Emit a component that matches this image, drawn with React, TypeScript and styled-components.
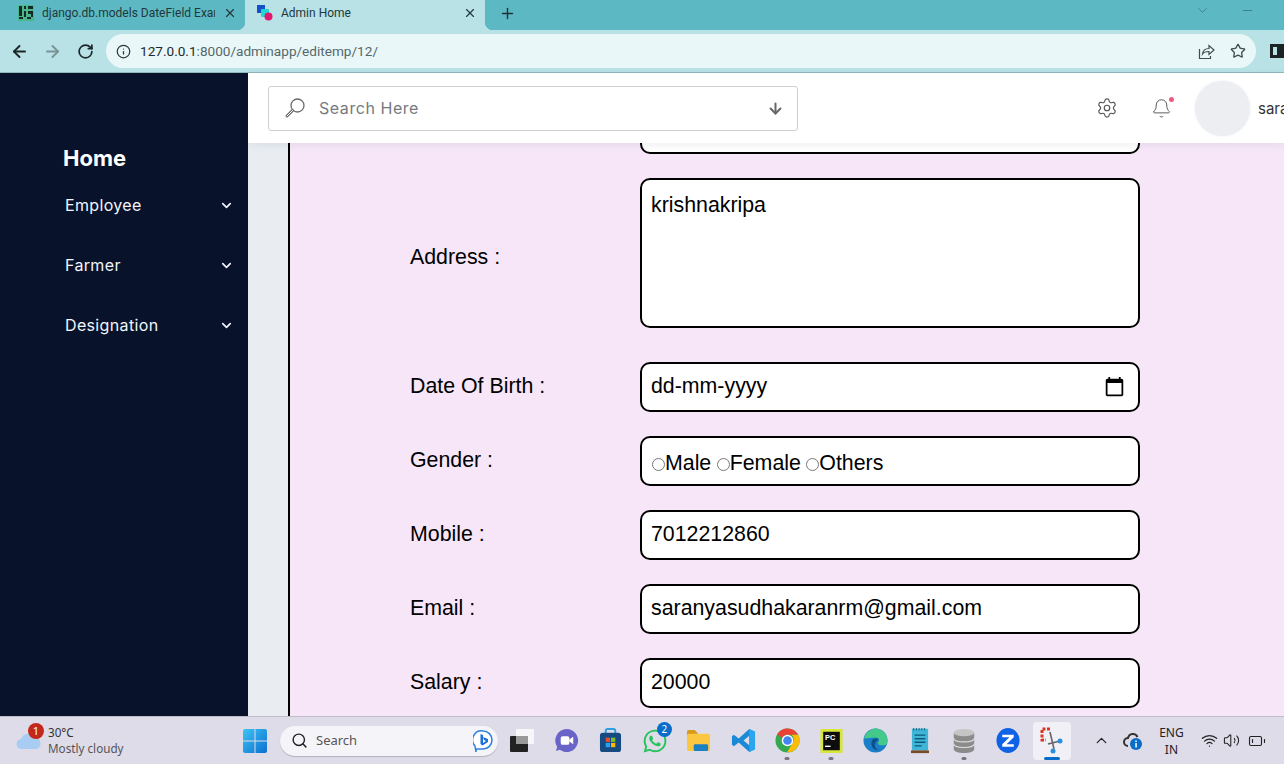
import React from 'react';
import styled, { createGlobalStyle, css } from 'styled-components';
import {
  ArrowLeft, ArrowRight, RotateCw, Info, Star, X, Plus, ChevronDown, Minus,
  Settings, Bell, ArrowDown, Search, ChevronUp, Wifi, Volume2, BatteryLow,
} from 'lucide-react';
import { FaWhatsapp } from 'react-icons/fa';

const GlobalStyle = createGlobalStyle`
  html, body { margin: 0; padding: 0; overflow: hidden; }
  * { box-sizing: border-box; }
  svg { flex: none; }
`;

const Screen = styled.div`
  width: 1284px;
  height: 764px;
  display: flex;
  flex-direction: column;
  overflow: hidden;
  font-family: 'Liberation Sans', Arial, sans-serif;
`;

/* browser chrome */
const TabStrip = styled.div`
  height: 30px;
  flex: none;
  display: flex;
  align-items: stretch;
  background: #5cb8c2;
  color: #23383b;
  font-family: Roboto, 'Noto Sans', sans-serif;
  font-size: 12px;
`;

const Tab = styled.div<{ $active?: boolean; $width: number }>`
  position: relative;
  width: ${p => p.$width}px;
  display: flex;
  align-items: center;
  gap: 8px;
  padding: 0 8px 4px ${p => (p.$active ? 12 : 18)}px;
  background: ${p => (p.$active ? '#b8e2e6' : 'transparent')};

  ${p => p.$active && css`
    &::before, &::after {
      content: '';
      position: absolute;
      bottom: 0;
      width: 8px;
      height: 8px;
    }
    &::before {
      left: -8px;
      background: radial-gradient(circle at 0 0, transparent 8px, #b8e2e6 8.5px);
    }
    &::after {
      right: -8px;
      background: radial-gradient(circle at 100% 0, transparent 8px, #b8e2e6 8.5px);
    }
  `}
`;

const TabTitle = styled.span`
  flex: 1;
  white-space: nowrap;
  overflow: hidden;
`;

const NewTab = styled.div`
  width: 44px;
  display: flex;
  align-items: center;
  justify-content: center;
  padding-bottom: 3px;
  color: #1f3336;
`;

const WindowControls = styled.div`
  margin-left: auto;
  display: flex;
  gap: 30px;
  padding: 3px 29px 0 0;
  color: #33626a;
`;

const Toolbar = styled.div`
  height: 43px;
  flex: none;
  display: flex;
  align-items: center;
  padding: 0 0 0 3px;
  background: #b8e2e6;
  border-bottom: 1px solid #8fb8bc;
`;

const NavButton = styled.div<{ $dim?: boolean }>`
  width: 33px;
  display: flex;
  justify-content: center;
  color: ${p => (p.$dim ? '#7b9295' : '#1d2526')};
`;

const Omnibox = styled.div`
  width: 1150px;
  height: 34px;
  margin-left: 4px;
  flex: none;
  display: flex;
  align-items: center;
  padding: 0 2px 0 10px;
  border-radius: 17px;
  background: #eaf7f8;
  color: #54686b;
  font-family: Roboto, 'Noto Sans', sans-serif;
  font-size: 13.6px;
`;

const Url = styled.div`
  flex: 1;
  padding-left: 9px;
  b { font-weight: 400; color: #1f2a2c; }
`;

const OmniAction = styled.div`
  width: 32px;
  display: flex;
  justify-content: center;
  color: #3f4d4f;
`;

const SidePanelGlyph = styled.div`
  width: 14px;
  height: 14px;
  margin-left: 14px;
  flex: none;
  border: 3px solid #1c2324;
  border-right-width: 7px;
`;

/* page */
const Page = styled.div`
  flex: 1;
  min-height: 0;
  display: flex;
`;

const Sidebar = styled.nav`
  width: 248px;
  flex: none;
  padding: 71px 14px 0 63px;
  background: #09122b;
  color: #f1f5fc;
  font-family: Inter, sans-serif;
`;

const Home = styled.div`
  font-size: 22px;
  font-weight: 700;
  line-height: 28px;
  color: #fff;
  margin-bottom: 20px;
`;

const NavItem = styled.div`
  height: 60px;
  display: flex;
  justify-content: space-between;
  padding: 2px 0 0 2px;
  font-size: 16px;
  line-height: 22px;
  letter-spacing: 0.35px;
`;

const NavChevron = styled(ChevronDown)`
  margin-top: 4px;
`;

const Main = styled.div`
  flex: 1;
  min-width: 0;
  display: flex;
  flex-direction: column;
  background: #e9edf2;
`;

const TopBar = styled.header`
  height: 70px;
  flex: none;
  position: relative;
  z-index: 1;
  display: flex;
  align-items: center;
  padding-left: 20px;
  background: #fff;
  box-shadow: 0 2px 8px rgba(40, 50, 70, 0.08);
  font-family: Inter, sans-serif;
`;

const SearchBox = styled.div`
  width: 530px;
  height: 45px;
  flex: none;
  display: flex;
  align-items: center;
  gap: 13px;
  padding: 0 13px 0 15px;
  margin-right: 281px;
  border: 1px solid #cfcfcf;
  border-radius: 3px;
  color: #757a80;
  font-size: 16px;
  letter-spacing: 0.55px;
`;

const SearchText = styled.span`
  flex: 1;
`;

const TopAction = styled.div`
  position: relative;
  width: 55px;
  flex: none;
  display: flex;
  justify-content: center;
  color: #555;
`;

const NotificationDot = styled.span`
  position: absolute;
  top: -1px;
  right: 15px;
  width: 5px;
  height: 5px;
  border-radius: 50%;
  background: #f4587f;
`;

const Avatar = styled.div`
  width: 55px;
  height: 55px;
  margin-left: 6px;
  flex: none;
  border-radius: 50%;
  background: #eceef1;
  box-shadow: 0 0 3px #eceef1;
`;

const UserName = styled.span`
  margin-left: 8px;
  font-size: 15px;
  color: #333;
  white-space: nowrap;
`;

const Content = styled.div`
  flex: 1;
  min-height: 0;
  overflow: hidden;
  padding-left: 40px;
`;

const FormPanel = styled.form`
  margin-top: -39px;
  min-height: 700px;
  padding-left: 120px;
  display: flex;
  flex-direction: column;
  gap: 24px;
  border-left: 2px solid #000;
  background: #f6e6f8;
  color: #000;
  font-size: 21.33px;
`;

const FormRow = styled.div<{ $extraTop?: number }>`
  display: grid;
  grid-template-columns: 230px 500px;
  align-items: center;
  margin-top: ${p => p.$extraTop ?? 0}px;
`;

const FieldLabel = styled.label<{ $shift?: number }>`
  padding: ${p => p.$shift ?? 0}px 0 ${p => (p.$shift ? 0 : 1)}px;
`;

const fieldCss = css`
  width: 500px;
  border: 2px solid #000;
  border-radius: 10px;
  background: #fff;
  color: #000;
  font-family: 'Liberation Sans', Arial, sans-serif;
  font-size: 21.33px;
  outline: none;
`;

const TextField = styled.input`
  ${fieldCss}
  height: 50px;
  padding: 0 9px 2px;
`;

const AddressField = styled.textarea`
  ${fieldCss}
  height: 150px;
  padding: 13px 9px;
  resize: none;
  display: block;
`;

const DateField = styled.div`
  ${fieldCss}
  height: 50px;
  padding: 0 13px 2px 9px;
  display: flex;
  align-items: center;
  justify-content: space-between;
`;

const RadioGroup = styled.div`
  ${fieldCss}
  height: 50px;
  padding: 4px 10px 0;
  display: flex;
  align-items: center;
`;

const RadioLabel = styled.label`
  display: flex;
  align-items: center;
  margin-right: 5.5px;
  input { margin: 3px 0 0 0; width: 13px; height: 13px; }
`;

/* windows taskbar */
const Taskbar = styled.footer`
  height: 48px;
  flex: none;
  display: flex;
  align-items: center;
  background: #dfdcea;
  border-top: 1px solid #c0bcc9;
  font-family: 'Noto Sans', Roboto, sans-serif;
  font-size: 11.7px;
  color: #333;
`;

const Weather = styled.div`
  width: 243px;
  flex: none;
  position: relative;
  display: flex;
  align-items: center;
  gap: 6px;
  padding: 0 0 2px 16px;
  line-height: 16px;
`;

const WeatherBadge = styled.span`
  position: absolute;
  left: 28px;
  top: -1px;
  width: 16px;
  height: 16px;
  border-radius: 50%;
  background: #c4281c;
  color: #fff;
  font-size: 11px;
  line-height: 16px;
  text-align: center;
`;

const MutedLine = styled.div`
  color: #555;
`;

const TaskSearch = styled.div`
  width: 218px;
  height: 30px;
  margin-left: 13px;
  flex: none;
  display: flex;
  align-items: center;
  gap: 8px;
  padding: 0 5px 0 11px;
  border-radius: 15px;
  background: #f5f4f9;
  box-shadow: 0 1px 1px #b4b1bd;
  color: #555;
  font-size: 13px;
  span { flex: 1; padding-bottom: 2px; }
`;

const TaskApps = styled.div`
  display: flex;
  margin-left: 2px;
  flex: none;
`;

const TaskApp = styled.div<{ $selected?: boolean }>`
  position: relative;
  width: ${p => (p.$selected ? 38.2 : 44.2)}px;
  margin: 0 ${p => (p.$selected ? 3 : 0)}px;
  height: 38px;
  display: flex;
  align-items: center;
  justify-content: center;
  border-radius: 4px;
  background: ${p => (p.$selected ? '#f1f0f6' : 'transparent')};
`;

const RunningMark = styled.span<{ $active?: boolean }>`
  position: absolute;
  bottom: 0;
  left: 50%;
  transform: translateX(-50%);
  width: ${p => (p.$active ? 16 : 5)}px;
  height: 3px;
  border-radius: 2px;
  background: ${p => (p.$active ? '#0a6cc9' : '#77757d')};
`;

const AppBadge = styled.span`
  position: absolute;
  top: 0;
  right: 5px;
  width: 15px;
  height: 15px;
  border-radius: 50%;
  background: #0a6cc9;
  color: #fff;
  font-size: 10px;
  line-height: 15px;
  text-align: center;
`;

const Tray = styled.div`
  display: flex;
  align-items: center;
  margin-left: 13px;
  flex: none;
  color: #222;
`;

const TrayLang = styled.div`
  width: 40px;
  margin-right: 3px;
  text-align: center;
  font-size: 12px;
  line-height: 17px;
`;

const TrayIcon = styled.div<{ $width: number }>`
  width: ${p => p.$width}px;
  display: flex;
  justify-content: center;
`;

const TabDjangoIcon = () => (
  <svg width="16" height="16" viewBox="0 0 16 16">
    <rect width="16" height="16" fill="#3db85f" opacity="0.55" />
    <path d="M1 1h3v10H1zM6 1h2v3H6zM10 1h5v3h-5zM6 6h2v6H6zM10 6h5v3h-5zM13 9h2v3h-2zM1 12h4v2H1zM9 12h4v2H9z" fill="#142a2a" />
  </svg>
);

const TabAdminIcon = () => (
  <svg width="16" height="16" viewBox="0 0 16 16">
    <rect x="0" y="0" width="8" height="8" fill="#1450c8" />
    <rect x="4" y="4" width="8" height="8" rx="1" fill="#1fd6d0" />
    <circle cx="11.5" cy="11.5" r="4" fill="#e0196e" />
  </svg>
);

const ShareBoxIcon = () => (
  <svg width="17" height="17" viewBox="0 0 17 17" fill="none" stroke="#3f4d4f" strokeWidth="1.2">
    <path d="M1.500 6v9.500h11V13" />
    <path d="M4.500 11c.5-4 3-5.500 6.500-5.500V2.500l5 4.500-5 4.500V8.500c-3 0-5 .5-6.500 2.500z" />
  </svg>
);

const LoupeIcon = () => (
  <svg width="22" height="22" viewBox="0 0 22 22" fill="none" stroke="#6b6b6b">
    <circle cx="13.5" cy="8.500" r="6.500" strokeWidth="1.300" />
    <path d="M8.500 13.500l-5.500 5.500" strokeWidth="3" strokeLinecap="round" />
    <path d="M8.500 13.500l-5.500 5.500" stroke="#fff" strokeWidth="1" strokeLinecap="round" />
  </svg>
);

const CalendarIcon = () => (
  <svg width="21" height="21" viewBox="0 0 24 24" fill="#000">
    <path d="M20 3h-1V1h-2v2H7V1H5v2H4c-1.100 0-2 .9-2 2v16c0 1.100.9 2 2 2h16c1.100 0 2-.9 2-2V5c0-1.100-.9-2-2-2zm0 18H4V8h16v13z" />
  </svg>
);

const CloudIcon = () => (
  <svg width="26" height="24" viewBox="0 0 26 24">
    <circle cx="18" cy="10" r="5" fill="#f2a33a" />
    <path d="M6 21a5 5 0 0 1-1-10 7 7 0 0 1 13-1 5.500 5.500 0 0 1 2 11z" fill="#a9cdf2" />
  </svg>
);

const WindowsLogo = () => (
  <svg width="24" height="24" viewBox="0 0 24 24">
    <defs>
      <linearGradient id="winGrad" x1="0" y1="0" x2="1" y2="1">
        <stop offset="0" stopColor="#3fc4f4" />
        <stop offset="1" stopColor="#0b6fd0" />
      </linearGradient>
    </defs>
    <path d="M0 2a2 2 0 0 1 2-2h9.500v11.500H0zM12.500 0H22a2 2 0 0 1 2 2v9.500H12.500zM0 12.500h11.500V24H2a2 2 0 0 1-2-2zM12.500 12.500H24V22a2 2 0 0 1-2 2h-9.500z" fill="url(#winGrad)" />
  </svg>
);

const BingIcon = () => (
  <svg width="20" height="24" viewBox="0 0 20 24">
    <path d="M10 2a9 9 0 0 1 0 18H3l0 3 -1-6a9 9 0 0 1 8-15z" fill="#fff" stroke="#2d7fe0" strokeWidth="1.500" />
    <path d="M7.500 5l2.500 1v8l3-2-2-1 -1-3 5 2v3l-5.500 3.500-2-1.500z" fill="#1c6fd6" />
  </svg>
);

const TaskViewIcon = () => (
  <svg width="24" height="23" viewBox="0 0 24 23">
    <rect x="6" y="0" width="18" height="15" rx="1" fill="#f7f7f9" />
    <rect x="0" y="7" width="18" height="16" rx="1" fill="#222" />
    <rect x="6" y="7" width="12" height="8" fill="#999" />
  </svg>
);

const ChatIcon = () => (
  <svg width="25" height="25" viewBox="0 0 26 26">
    <path d="M13 1a12 12 0 1 1-7 21.700L2 24l1.300-4.500A12 12 0 0 1 13 1z" fill="#6a64c8" />
    <rect x="7" y="8.500" width="9" height="9" rx="2" fill="#fff" />
    <path d="M16 12l4-3v8l-4-3z" fill="#fff" />
  </svg>
);

const StoreIcon = () => (
  <svg width="23" height="25" viewBox="0 0 24 26">
    <path d="M7 6V3a2 2 0 0 1 2-2h6a2 2 0 0 1 2 2v3" fill="none" stroke="#2b9fe0" strokeWidth="2" />
    <rect x="1" y="5" width="22" height="20" rx="3" fill="#164a83" />
    <rect x="7" y="10" width="4.500" height="4.500" fill="#ea4b2a" />
    <rect x="12.500" y="10" width="4.500" height="4.500" fill="#7ebc2a" />
    <rect x="7" y="15.500" width="4.500" height="4.500" fill="#26a3ef" />
    <rect x="12.500" y="15.500" width="4.500" height="4.500" fill="#fdb900" />
  </svg>
);

const FolderIcon = () => (
  <svg width="25" height="25" viewBox="0 0 26 26">
    <path d="M1 4a2 2 0 0 1 2-2h6l3 3v4H1z" fill="#d99a1c" />
    <rect x="1" y="6" width="24" height="18" rx="2" fill="#fbc740" />
    <rect x="8" y="17" width="15" height="7" rx="1.500" fill="#1b7fc4" />
  </svg>
);

const VsCodeIcon = () => (
  <svg width="25" height="25" viewBox="0 0 26 26">
    <path d="M19 1l6 3v18l-6 3-11-10-5 4-2-1.500V8.500L3 7l5 4zM19 8l-6 5 6 5z" fill="#1a8ad6" fillRule="evenodd" />
    <path d="M19 1l6 3v18l-6 3z" fill="#2ba6ee" />
  </svg>
);

const ChromeIcon = () => (
  <svg width="25" height="25" viewBox="0 0 26 26">
    <circle cx="13" cy="13" r="12.500" fill="#34a853" />
    <path d="M13 .5A12.500 12.500 0 0 1 24 7H13a6 6 0 0 0-5.500 3.500L2.300 6.500A12.500 12.500 0 0 1 13 .5z" fill="#ea4335" />
    <path d="M24 7a12.500 12.500 0 0 1-11.500 18.500L18 16a6 6 0 0 0-1-9z" fill="#fbbc04" />
    <circle cx="13" cy="13" r="6" fill="#fff" />
    <circle cx="13" cy="13" r="4.500" fill="#4285f4" />
  </svg>
);

const PyCharmIcon = () => (
  <svg width="23" height="24" viewBox="0 0 24 26">
    <rect x="0" y="0" width="24" height="26" fill="#d7e63a" />
    <rect x="3" y="3" width="18" height="20" fill="#0d0d0d" />
    <text x="5" y="12" fontSize="8" fontWeight="700" fill="#fff" fontFamily="Liberation Sans">PC</text>
    <rect x="5" y="18" width="6" height="1.500" fill="#fff" />
  </svg>
);

const EdgeIcon = () => (
  <svg width="25" height="25" viewBox="0 0 26 26">
    <circle cx="13" cy="13" r="12.500" fill="#1a7fc8" />
    <path d="M1 11C3 3 10 .5 13 .5 20 .5 25.500 6 25.500 14c0 3-2 4-5 4-4 0-5-1-5-3 2-1 1.500-5-3-5-4 0-7 1-11 1z" fill="#45c98a" />
    <path d="M13 11c-3 0-5 3-4 7 1 4 5 6 9 5-5 0-7-5-5-8 1-2 3-2 3-4z" fill="#0e4f8d" />
  </svg>
);

const NotepadIcon = () => (
  <svg width="18" height="27" viewBox="0 0 20 30">
    <rect x="1" y="2" width="18" height="24" rx="1" fill="#3fb6d8" />
    <path d="M3 1v3M6 1v3M9 1v3M12 1v3M15 1v3" stroke="#1b6f8a" strokeWidth="1.200" />
    <path d="M4 9h12M4 13h12M4 17h12M4 21h8" stroke="#0c5a78" strokeWidth="1.600" />
    <rect x="0" y="26" width="20" height="3" fill="#7a4a24" />
  </svg>
);

const DatabaseIcon = () => (
  <svg width="24" height="26" viewBox="0 0 24 28">
    <path d="M1 5v18c0 2.500 5 4 11 4s11-1.500 11-4V5z" fill="#8b8b8b" />
    <ellipse cx="12" cy="5" rx="11" ry="4" fill="#c5c5c5" />
    <path d="M1 11c0 2.500 5 4 11 4s11-1.500 11-4M1 17c0 2.500 5 4 11 4s11-1.500 11-4" fill="none" stroke="#e0e0e0" strokeWidth="1.200" />
  </svg>
);

const ZoomIcon = () => (
  <svg width="24" height="25" viewBox="0 0 24 26">
    <ellipse cx="12" cy="13" rx="12" ry="13" fill="#0f62e6" />
    <path d="M6 7h12v2.500L10.500 17H18v2.500H6V17l7.500-7.500H6z" fill="#fff" />
  </svg>
);

const SnipIcon = () => (
  <svg width="24" height="28" viewBox="0 0 24 28">
    <path d="M10 2H2v11h4" fill="none" stroke="#d8351f" strokeWidth="3" strokeDasharray="3 1.500" />
    <path d="M10 5l4 17M20 14L8 17" stroke="#666" strokeWidth="1.600" fill="none" />
    <circle cx="20" cy="14" r="2.500" fill="#2b8fe0" />
    <circle cx="13" cy="24" r="2.500" fill="#2b8fe0" />
  </svg>
);

const CloudInfoIcon = () => (
  <svg width="20" height="20" viewBox="0 0 20 20">
    <path d="M5 15a4 4 0 0 1 0-8 5 5 0 0 1 9.500-1" fill="none" stroke="#333" strokeWidth="2" />
    <circle cx="13" cy="13" r="6" fill="#0a6cc9" />
    <rect x="12.300" y="12" width="1.500" height="4.500" fill="#fff" />
    <rect x="12.300" y="9.500" width="1.500" height="1.500" fill="#fff" />
  </svg>
);

const taskApps = [
  { key: 'view', icon: <TaskViewIcon /> },
  { key: 'chat', icon: <ChatIcon /> },
  { key: 'store', icon: <StoreIcon /> },
  { key: 'whatsapp', icon: <FaWhatsapp size={26} color="#25c35a" />, badge: '2' },
  { key: 'folder', icon: <FolderIcon /> },
  { key: 'vscode', icon: <VsCodeIcon /> },
  { key: 'chrome', icon: <ChromeIcon />, running: true },
  { key: 'pycharm', icon: <PyCharmIcon />, running: true },
  { key: 'edge', icon: <EdgeIcon /> },
  { key: 'notepad', icon: <NotepadIcon /> },
  { key: 'db', icon: <DatabaseIcon />, running: true },
  { key: 'zoom', icon: <ZoomIcon /> },
  { key: 'snip', icon: <SnipIcon />, selected: true },
];

const navItems = ['Employee', 'Farmer', 'Designation'];

export default function App() {
  return (
    <Screen>
      <GlobalStyle />
      <TabStrip>
        <Tab $width={245}>
          <TabDjangoIcon />
          <TabTitle>django.db.models DateField Exan</TabTitle>
          <X size={14} strokeWidth={2} />
        </Tab>
        <Tab $active $width={240}>
          <TabAdminIcon />
          <TabTitle>Admin Home</TabTitle>
          <X size={14} strokeWidth={2} />
        </Tab>
        <NewTab><Plus size={17} strokeWidth={2} /></NewTab>
        <WindowControls>
          <ChevronDown size={15} strokeWidth={1} />
          <Minus size={15} strokeWidth={1} />
        </WindowControls>
      </TabStrip>

      <Toolbar>
        <NavButton><ArrowLeft size={19} strokeWidth={2.4} /></NavButton>
        <NavButton $dim><ArrowRight size={19} strokeWidth={2.4} /></NavButton>
        <NavButton><RotateCw size={17} strokeWidth={2.4} /></NavButton>
        <Omnibox>
          <Info size={15} strokeWidth={2} color="#2c3a3c" />
          <Url><b>127.0.0.1</b>:8000/adminapp/editemp/12/</Url>
          <OmniAction><ShareBoxIcon /></OmniAction>
          <OmniAction><Star size={16} strokeWidth={2} /></OmniAction>
        </Omnibox>
        <SidePanelGlyph />
      </Toolbar>

      <Page>
        <Sidebar>
          <Home>Home</Home>
          {navItems.map(item => (
            <NavItem key={item}>
              {item}
              <NavChevron size={15} strokeWidth={2.6} />
            </NavItem>
          ))}
        </Sidebar>

        <Main>
          <TopBar>
            <SearchBox>
              <LoupeIcon />
              <SearchText>Search Here</SearchText>
              <ArrowDown size={17} strokeWidth={2.8} color="#666" />
            </SearchBox>
            <TopAction><Settings size={22} strokeWidth={1.3} /></TopAction>
            <TopAction>
              <Bell size={21} strokeWidth={1.1} />
              <NotificationDot />
            </TopAction>
            <Avatar />
            <UserName>saranya</UserName>
          </TopBar>

          <Content>
            <FormPanel>
              <FormRow>
                <FieldLabel>Name :</FieldLabel>
                <TextField readOnly />
              </FormRow>

              <FormRow>
                <FieldLabel $shift={8}>Address :</FieldLabel>
                <AddressField readOnly defaultValue="krishnakripa" />
              </FormRow>

              <FormRow $extraTop={10}>
                <FieldLabel>Date Of Birth :</FieldLabel>
                <DateField>dd-mm-yyyy <CalendarIcon /></DateField>
              </FormRow>

              <FormRow>
                <FieldLabel>Gender :</FieldLabel>
                <RadioGroup>
                  <RadioLabel><input type="radio" name="gender" />Male</RadioLabel>
                  <RadioLabel><input type="radio" name="gender" />Female</RadioLabel>
                  <RadioLabel><input type="radio" name="gender" />Others</RadioLabel>
                </RadioGroup>
              </FormRow>

              <FormRow>
                <FieldLabel>Mobile :</FieldLabel>
                <TextField readOnly defaultValue="7012212860" />
              </FormRow>

              <FormRow>
                <FieldLabel>Email :</FieldLabel>
                <TextField readOnly defaultValue="saranyasudhakaranrm@gmail.com" />
              </FormRow>

              <FormRow>
                <FieldLabel>Salary :</FieldLabel>
                <TextField readOnly defaultValue="20000" />
              </FormRow>
            </FormPanel>
          </Content>
        </Main>
      </Page>

      <Taskbar>
        <Weather>
          <CloudIcon />
          <WeatherBadge>1</WeatherBadge>
          <div>
            <div>30°C</div>
            <MutedLine>Mostly cloudy</MutedLine>
          </div>
        </Weather>
        <WindowsLogo />
        <TaskSearch>
          <Search size={17} strokeWidth={2} color="#222" />
          <span>Search</span>
          <BingIcon />
        </TaskSearch>
        <TaskApps>
          {taskApps.map(app => (
            <TaskApp key={app.key} $selected={app.selected}>
              {app.icon}
              {app.badge && <AppBadge>{app.badge}</AppBadge>}
              {app.running && <RunningMark />}
              {app.selected && <RunningMark $active />}
            </TaskApp>
          ))}
        </TaskApps>
        <Tray>
          <TrayIcon $width={28}><ChevronUp size={17} strokeWidth={1.8} /></TrayIcon>
          <TrayIcon $width={36}><CloudInfoIcon /></TrayIcon>
          <TrayLang>ENG<br />IN</TrayLang>
          <TrayIcon $width={30}><Wifi size={17} strokeWidth={1.8} /></TrayIcon>
          <TrayIcon $width={14}><Volume2 size={17} strokeWidth={1.5} /></TrayIcon>
          <TrayIcon $width={38}><BatteryLow size={18} strokeWidth={1.5} /></TrayIcon>
        </Tray>
      </Taskbar>
    </Screen>
  );
}
